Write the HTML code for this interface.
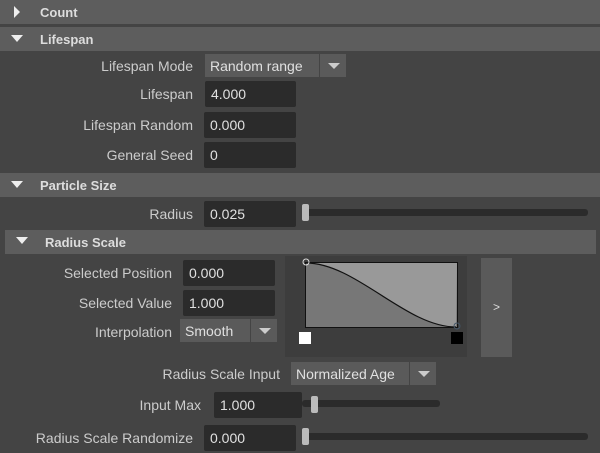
<!DOCTYPE html><html><head><style>
body{margin:0;width:600px;height:453px;background:#444;font-family:"Liberation Sans",sans-serif;font-size:14px;color:#ddd;position:relative;overflow:hidden}
.a{position:absolute}
.h{position:absolute;background:#5d5d5d;height:24px;font-weight:bold;font-size:13px;color:#ddd;line-height:25px}
.l{position:absolute;text-align:right;color:#ccc;line-height:27px}
.f{position:absolute;background:#2b2b2b;border-radius:2px;height:26px;line-height:27px;padding-left:6px;box-sizing:border-box;color:#e0e0e0}
.d{position:absolute;background:#5a5a5a;height:23px;line-height:24px;padding-left:5px;box-sizing:border-box;color:#e0e0e0}
.d i{position:absolute;right:0;top:0;width:26px;height:23px;border-left:1px solid #444}
.d i:after{content:"";position:absolute;left:8px;top:9px;border-left:6px solid transparent;border-right:6px solid transparent;border-top:6px solid #ccc}
.tr{position:absolute;background:#2b2b2b;height:7px;border-radius:3px}
.th{position:absolute;background:#bbb;width:7px;height:17px;border-radius:2px}
.dn{position:absolute;border-left:6px solid transparent;border-right:6px solid transparent;border-top:7px solid #eee}
</style></head><body>
<div class="h" style="left:0;top:0;width:600px"><span class="a" style="left:14px;top:6px;border-top:6px solid transparent;border-bottom:6px solid transparent;border-left:6px solid #eee"></span><span class="a" style="left:40px">Count</span></div>
<div class="h" style="left:0;top:27px;width:600px"><span class="dn" style="left:11px;top:8px"></span><span class="a" style="left:40px">Lifespan</span></div>
<div class="l" style="left:0;width:193px;top:53px">Lifespan Mode</div>
<div class="d" style="left:205px;top:54px;width:141px">Random range<i></i></div>
<div class="l" style="left:0;width:193px;top:81px">Lifespan</div><div class="f" style="left:205px;top:81px;width:91px">4.000</div>
<div class="l" style="left:0;width:193px;top:112px">Lifespan Random</div><div class="f" style="left:204px;top:112px;width:92px">0.000</div>
<div class="l" style="left:0;width:193px;top:142px">General Seed</div><div class="f" style="left:204px;top:142px;width:92px">0</div>
<div class="h" style="left:0;top:173px;width:600px"><span class="dn" style="left:11px;top:8px"></span><span class="a" style="left:40px">Particle Size</span></div>
<div class="l" style="left:0;width:193px;top:201px">Radius</div><div class="f" style="left:204px;top:201px;width:92px">0.025</div>
<div class="tr" style="left:302px;top:209px;width:286px"></div><div class="th" style="left:302px;top:204px"></div>
<div class="h" style="left:5px;top:230px;width:591px"><span class="dn" style="left:11px;top:7px"></span><span class="a" style="left:40px">Radius Scale</span></div>
<div class="l" style="left:0;width:172px;top:260px">Selected Position</div><div class="f" style="left:183px;top:260px;width:92px">0.000</div>
<div class="l" style="left:0;width:172px;top:290px">Selected Value</div><div class="f" style="left:183px;top:290px;width:92px">1.000</div>
<div class="l" style="left:0;width:172px;top:319px">Interpolation</div>
<div class="d" style="left:180px;top:319px;width:97px">Smooth<i></i></div>
<div class="a" style="left:285px;top:256px;width:182px;height:101px;background:#3d3d3d"></div>
<svg class="a" style="left:296px;top:255px" width="175" height="95">
<rect x="9.5" y="7.5" width="152" height="65" fill="#777" stroke="#111"/>
<path d="M10 8 C60 8 110 72 160 72 L161 8 Z" fill="#999"/>
<path d="M10 8 C60 8 110 72 160 72" fill="none" stroke="#111" stroke-width="1.2"/>
<rect x="9.5" y="7.5" width="152" height="65" fill="none" stroke="#111"/>
<circle cx="10" cy="7" r="3" fill="none" stroke="#ddd"/>
<circle cx="161" cy="71" r="3" fill="none" stroke="#456"/>
<rect x="3" y="77" width="12" height="12" fill="#fff"/>
<rect x="155" y="77" width="12" height="12" fill="#000"/>
</svg>
<div class="a" style="left:481px;top:258px;width:31px;height:99px;background:#5a5a5a;text-align:center;line-height:99px;font-size:12px">&gt;</div>
<div class="l" style="left:0;width:280px;top:361px">Radius Scale Input</div>
<div class="d" style="left:291px;top:362px;width:145px">Normalized Age<i></i></div>
<div class="l" style="left:0;width:201px;top:392px">Input Max</div><div class="f" style="left:214px;top:392px;width:88px">1.000</div>
<div class="tr" style="left:302px;top:400px;width:138px"></div><div class="th" style="left:311px;top:396px"></div>
<div class="l" style="left:0;width:193px;top:425px">Radius Scale Randomize</div><div class="f" style="left:204px;top:425px;width:92px">0.000</div>
<div class="tr" style="left:302px;top:433px;width:286px"></div><div class="th" style="left:302px;top:428px"></div>
</body></html>
